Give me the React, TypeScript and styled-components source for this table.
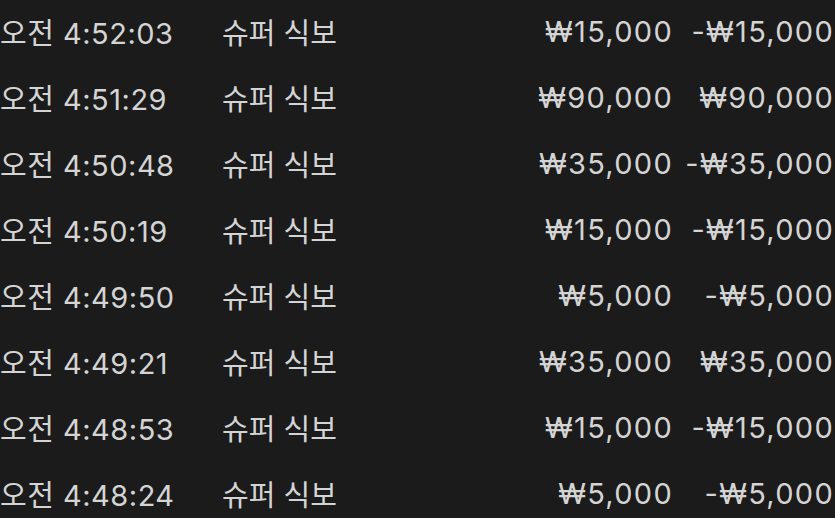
import React from 'react';
import styled, { createGlobalStyle } from 'styled-components';

const GlobalStyle = createGlobalStyle`
    html, body {
        margin: 0;
        padding: 0;
        background-color: #1b1b1b;
    }
`;

const StyledList = styled.div`
    width: 835px;
    height: 518px;
    overflow: hidden;
    background-color: #1b1b1b;
    color: #d4d4d4;
    font-family: 'Inter', 'Noto Sans CJK KR', sans-serif;
    font-size: 29px;
`;

const StyledRow = styled.div`
    display: flex;
    align-items: center;
    height: 66px;
    padding-bottom: 4px;
    box-sizing: border-box;
    white-space: nowrap;
`;

const StyledTime = styled.span`
    width: 222px;
    letter-spacing: 0.5px;
`;

const StyledName = styled.span`
    flex: 1;
`;

const StyledAmount = styled.span<{ $width: number }>`
    width: ${(p) => p.$width}px;
    text-align: right;
    letter-spacing: 1.3px;
    margin-right: -1px;
`;

const StyledEdge = styled.span`
    width: 2px;
`;

const rows = [
    { time: '오전 4:52:03', amount: '₩15,000', balance: '-₩15,000' },
    { time: '오전 4:51:29', amount: '₩90,000', balance: '₩90,000' },
    { time: '오전 4:50:48', amount: '₩35,000', balance: '-₩35,000' },
    { time: '오전 4:50:19', amount: '₩15,000', balance: '-₩15,000' },
    { time: '오전 4:49:50', amount: '₩5,000', balance: '-₩5,000' },
    { time: '오전 4:49:21', amount: '₩35,000', balance: '₩35,000' },
    { time: '오전 4:48:53', amount: '₩15,000', balance: '-₩15,000' },
    { time: '오전 4:48:24', amount: '₩5,000', balance: '-₩5,000' },
];

const App = () => (
    <>
        <GlobalStyle />
        <StyledList>
            {rows.map((r) => (
                <StyledRow key={r.time}>
                    <StyledTime>{r.time}</StyledTime>
                    <StyledName>슈퍼 식보</StyledName>
                    <StyledAmount $width={201}>{r.amount}</StyledAmount>
                    <StyledAmount $width={162}>{r.balance}</StyledAmount>
                    <StyledEdge />
                </StyledRow>
            ))}
        </StyledList>
    </>
);

export default App;
